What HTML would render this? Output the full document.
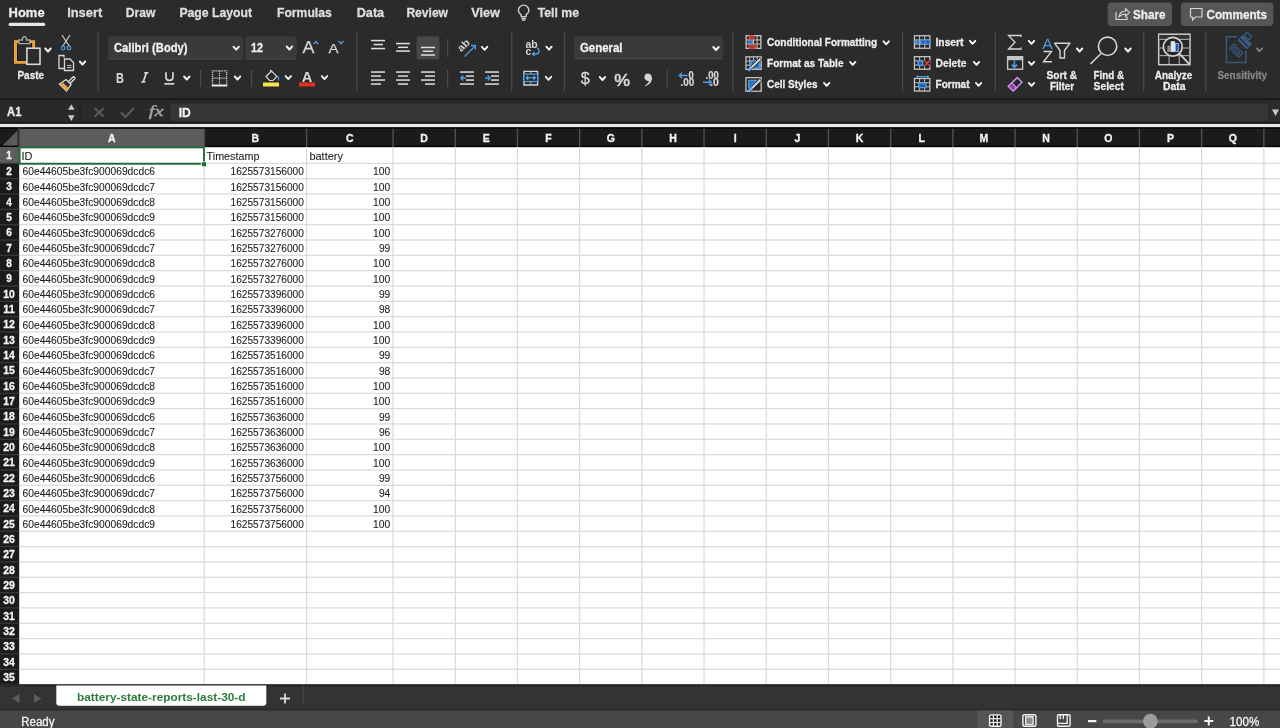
<!DOCTYPE html>
<html><head><meta charset="utf-8"><title>Excel</title>
<style>html,body{margin:0;padding:0;width:1280px;height:728px;overflow:hidden;background:#2b2b2b}
svg{display:block;will-change:transform}</style></head><body>
<svg width="1280" height="728" viewBox="0 0 1280 728" font-family='"Liberation Sans", sans-serif'><rect x="0" y="0" width="1280" height="98" fill="#2b2b2b"/>
<text x="8.6" y="17" font-size="13" font-weight="bold" fill="#ececec" text-anchor="start" textLength="36" lengthAdjust="spacingAndGlyphs" stroke="#ececec" stroke-width="0.3">Home</text>
<text x="67.2" y="17" font-size="13" font-weight="bold" fill="#dedede" text-anchor="start" textLength="35" lengthAdjust="spacingAndGlyphs" stroke="#dedede" stroke-width="0.3">Insert</text>
<text x="125.8" y="17" font-size="13" font-weight="bold" fill="#dedede" text-anchor="start" textLength="29.7" lengthAdjust="spacingAndGlyphs" stroke="#dedede" stroke-width="0.3">Draw</text>
<text x="179.4" y="17" font-size="13" font-weight="bold" fill="#dedede" text-anchor="start" textLength="72.6" lengthAdjust="spacingAndGlyphs" stroke="#dedede" stroke-width="0.3">Page Layout</text>
<text x="277" y="17" font-size="13" font-weight="bold" fill="#dedede" text-anchor="start" textLength="54.7" lengthAdjust="spacingAndGlyphs" stroke="#dedede" stroke-width="0.3">Formulas</text>
<text x="356.7" y="17" font-size="13" font-weight="bold" fill="#dedede" text-anchor="start" textLength="27.5" lengthAdjust="spacingAndGlyphs" stroke="#dedede" stroke-width="0.3">Data</text>
<text x="406.4" y="17" font-size="13" font-weight="bold" fill="#dedede" text-anchor="start" textLength="41.6" lengthAdjust="spacingAndGlyphs" stroke="#dedede" stroke-width="0.3">Review</text>
<text x="471.3" y="17" font-size="13" font-weight="bold" fill="#dedede" text-anchor="start" textLength="28.7" lengthAdjust="spacingAndGlyphs" stroke="#dedede" stroke-width="0.3">View</text>
<text x="537.7" y="17" font-size="13" font-weight="bold" fill="#dedede" text-anchor="start" textLength="41.3" lengthAdjust="spacingAndGlyphs" stroke="#dedede" stroke-width="0.3">Tell me</text>
<rect x="8.6" y="22.8" width="36.7" height="3.2" fill="#e6e6e6" rx="1.6"/>
<path d="M521.3,16.6 L521.1,14.6 C519.2,13.3 518.4,11.7 518.4,10.4 A5.25,5.25 0 1 1 528.9,10.4 C528.9,11.7 528.1,13.3 526.2,14.6 L526,16.6 Z" stroke="#d2d2d2" stroke-width="1.4" fill="none"/>
<path d="M521.3,18.3 H526 M521.9,20 H525.4" stroke="#d2d2d2" stroke-width="1.3" fill="none"/>
<rect x="1107.7" y="2.4" width="64.3" height="23.6" fill="#565656" rx="4"/>
<rect x="1180.9" y="2.4" width="92.4" height="23.6" fill="#565656" rx="4"/>
<path d="M1116,12 V19.5 H1127 V16.5" stroke="#d4d4d4" stroke-width="1.2" fill="none"/>
<path d="M1119,17 C1119.5,12.5 1122,11 1125.5,11 V8.5 L1129.5,12.5 L1125.5,16.5 V14 C1122.5,14 1120.5,15 1119,17 Z" stroke="#d4d4d4" stroke-width="1.1" fill="none"/>
<text x="1133" y="18.5" font-size="13" font-weight="bold" fill="#ececec" text-anchor="start" textLength="32.5" lengthAdjust="spacingAndGlyphs" stroke="#ececec" stroke-width="0.3">Share</text>
<path d="M1190.5,8.5 H1202 V17 H1195.5 L1192.5,20 V17 H1190.5 Z" stroke="#d4d4d4" stroke-width="1.2" fill="none" stroke-linejoin="round"/>
<text x="1206.5" y="18.5" font-size="13" font-weight="bold" fill="#ececec" text-anchor="start" textLength="60.5" lengthAdjust="spacingAndGlyphs" stroke="#ececec" stroke-width="0.3">Comments</text>
<rect x="15.5" y="41.7" width="18.1" height="20.6" fill="#2b2b2b" stroke="#e9a23b" stroke-width="3"/>
<rect x="17.5" y="43.6" width="14.1" height="16.6" fill="none" stroke="#0e1a26" stroke-width="1"/>
<path d="M18.9,43.6 V40 H22.3 C22.3,35.6 26.5,35.6 26.5,40 H29.8 V43.6 Z" stroke="#a8a8a8" stroke-width="1.3" fill="#2b2b2b"/>
<rect x="26.9" y="48.2" width="13.1" height="16.1" fill="#2b2b2b" stroke="#d8d8d8" stroke-width="1.6"/>
<path d="M45.3,48.5 L48,51.5 L50.7,48.5" stroke="#f4f4f4" stroke-width="1.9" fill="none" stroke-linecap="round" stroke-linejoin="round"/>
<text x="17.5" y="79" font-size="11.5" font-weight="bold" fill="#ececec" text-anchor="start" textLength="26.5" lengthAdjust="spacingAndGlyphs" stroke="#ececec" stroke-width="0.3">Paste</text>
<path d="M62,35 L69.5,46.5 M70,35 L62.5,46.5" stroke="#d6d6d6" stroke-width="1.1" fill="none"/>
<circle cx="63.2" cy="48" r="1.8" fill="none" stroke="#4f9be0" stroke-width="1.2"/>
<circle cx="69" cy="48" r="1.8" fill="none" stroke="#4f9be0" stroke-width="1.2"/>
<path d="M64,57.5 V55.5 H59 V68.5 H64" stroke="#d6d6d6" stroke-width="1.3" fill="none"/>
<path d="M64.5,59 H70 L73.5,62.5 V70.5 H64.5 Z" stroke="#d6d6d6" stroke-width="1.3" fill="none"/>
<path d="M67,65.5 H71.5 M67,67.5 H71.5" stroke="#d6d6d6" stroke-width="0.9" fill="none"/>
<path d="M79.8,61.5 L82.5,64.5 L85.2,61.5" stroke="#f4f4f4" stroke-width="1.9" fill="none" stroke-linecap="round" stroke-linejoin="round"/>
<path d="M59.5,84 L66.5,91 L71,84.5 L66,79.5 Z" stroke="#e2e2e2" stroke-width="1.3" fill="#2b2b2b"/>
<path d="M60.5,85 L66.5,91 L68.5,88 L63,82.5 Z" stroke="none" stroke-width="0" fill="#e9a440"/>
<path d="M68.5,81.5 L73.5,76.5 M70.3,83.3 L75.3,78.3 M73.5,76.5 L75.3,78.3" stroke="#e2e2e2" stroke-width="1.3" fill="none"/>
<rect x="97.5" y="32" width="1.2" height="59" fill="#4b4b4b"/>
<rect x="108" y="36.2" width="135.2" height="23.4" fill="#3a3a3a" rx="3.5"/>
<rect x="108.5" y="58.3" width="134.2" height="1.3" fill="#454545"/>
<text x="114" y="52" font-size="12.5" font-weight="bold" fill="#f0f0f0" text-anchor="start" textLength="73.6" lengthAdjust="spacingAndGlyphs" stroke="#f0f0f0" stroke-width="0.3">Calibri (Body)</text>
<path d="M233.5,46.7 L236.2,49.7 L238.89999999999998,46.7" stroke="#f4f4f4" stroke-width="1.9" fill="none" stroke-linecap="round" stroke-linejoin="round"/>
<rect x="245.3" y="36.2" width="51.4" height="23.4" fill="#3a3a3a" rx="3.5"/>
<rect x="245.8" y="58.3" width="50.4" height="1.3" fill="#454545"/>
<text x="251" y="52" font-size="12.5" font-weight="bold" fill="#f0f0f0" text-anchor="start" textLength="12" lengthAdjust="spacingAndGlyphs" stroke="#f0f0f0" stroke-width="0.3">12</text>
<path d="M286.7,46.5 L289.4,49.5 L292.09999999999997,46.5" stroke="#f4f4f4" stroke-width="1.9" fill="none" stroke-linecap="round" stroke-linejoin="round"/>
<text x="302.5" y="53" font-size="16" font-weight="normal" fill="#d4d4d4" text-anchor="start" textLength="12" lengthAdjust="spacingAndGlyphs" stroke="#d4d4d4" stroke-width="0.25">A</text>
<path d="M313.7,44 L316,41.6 L318.3,44" stroke="#4f9be0" stroke-width="1.4" fill="none"/>
<text x="328.5" y="53" font-size="13" font-weight="normal" fill="#d4d4d4" text-anchor="start" textLength="10" lengthAdjust="spacingAndGlyphs" stroke="#d4d4d4" stroke-width="0.25">A</text>
<path d="M338.5,41 L341,43.7 L343.5,41" stroke="#4f9be0" stroke-width="1.3" fill="none"/>
<text x="116" y="82.7" font-size="14.5" font-weight="bold" fill="#dadada" text-anchor="start" textLength="7.9" lengthAdjust="spacingAndGlyphs" stroke="#dadada" stroke-width="0.1">B</text>
<path d="M144.2,72.9 H148.3 M141.2,82 H145.3 M146.3,72.9 L143.2,82" stroke="#d8d8d8" stroke-width="1.7" fill="none"/>
<path d="M166,72.3 V77.6 C166,81.3 172.9,81.3 172.9,77.6 V72.3" stroke="#d8d8d8" stroke-width="1.7" fill="none"/>
<rect x="164.4" y="83" width="9.9" height="1.7" fill="#d8d8d8"/>
<path d="M184.10000000000002,76.5 L186.8,79.5 L189.5,76.5" stroke="#f4f4f4" stroke-width="1.9" fill="none" stroke-linecap="round" stroke-linejoin="round"/>
<rect x="200.0" y="70" width="1.2" height="17" fill="#4b4b4b"/>
<path d="M212.5,70.8 H226.6 V85.5 H212.5 Z" stroke="#bdbdbd" stroke-width="1.3" fill="none" stroke-dasharray="1.3,0.6"/>
<path d="M219.5,71 V85 M212.5,78.2 H226.6" stroke="#c4c4c4" stroke-width="1.2" fill="none" stroke-dasharray="1.2,0.8"/>
<rect x="211.8" y="84.6" width="15.5" height="1.8" fill="#ececec"/>
<path d="M234.8,76.5 L237.5,79.5 L240.2,76.5" stroke="#f4f4f4" stroke-width="1.9" fill="none" stroke-linecap="round" stroke-linejoin="round"/>
<rect x="251.0" y="70" width="1.2" height="17" fill="#4b4b4b"/>
<path d="M266,76.5 L271.5,71 L277,76.5 L273,80.5 H269.5 Z" stroke="#d6d6d6" stroke-width="1.2" fill="none"/>
<path d="M270,70 L272,72" stroke="#d6d6d6" stroke-width="1.2" fill="none"/>
<path d="M277.5,76 C279,77.5 279,80 277.7,80.5" stroke="#4f9be0" stroke-width="1.3" fill="none"/>
<rect x="263" y="82.5" width="16" height="4" fill="#f3e54a"/>
<path d="M285.6,76.1 L288.3,79.1 L291.0,76.1" stroke="#f4f4f4" stroke-width="1.9" fill="none" stroke-linecap="round" stroke-linejoin="round"/>
<text x="301.8" y="81.6" font-size="14" font-weight="bold" fill="#d8d8d8" text-anchor="start" textLength="10.6" lengthAdjust="spacingAndGlyphs">A</text>
<rect x="299" y="82.5" width="16" height="4" fill="#e2301f"/>
<path d="M321.8,76.1 L324.5,79.1 L327.2,76.1" stroke="#f4f4f4" stroke-width="1.9" fill="none" stroke-linecap="round" stroke-linejoin="round"/>
<rect x="356.2" y="32" width="1.2" height="59" fill="#4b4b4b"/>
<rect x="371" y="39.8" width="14" height="1.5" fill="#dedede"/>
<rect x="373.5" y="43.8" width="9.5" height="1.5" fill="#dedede"/>
<rect x="371" y="47.8" width="14" height="1.5" fill="#dedede"/>
<rect x="396" y="42.8" width="14" height="1.5" fill="#dedede"/>
<rect x="398" y="46.599999999999994" width="10" height="1.5" fill="#dedede"/>
<rect x="396" y="50.3" width="14" height="1.5" fill="#dedede"/>
<rect x="416.5" y="36.3" width="23" height="23.1" fill="#474747" rx="3"/>
<rect x="421" y="46.699999999999996" width="14" height="1.5" fill="#dedede"/>
<rect x="423" y="50.5" width="10" height="1.5" fill="#dedede"/>
<rect x="421" y="54.3" width="14" height="1.5" fill="#dedede"/>
<rect x="371" y="71.3" width="14" height="1.5" fill="#dedede"/>
<rect x="371" y="75.3" width="10" height="1.5" fill="#dedede"/>
<rect x="371" y="79.3" width="14" height="1.5" fill="#dedede"/>
<rect x="371" y="83.3" width="10" height="1.5" fill="#dedede"/>
<rect x="396" y="71.3" width="14" height="1.5" fill="#dedede"/>
<rect x="398" y="75.3" width="10" height="1.5" fill="#dedede"/>
<rect x="396" y="79.3" width="14" height="1.5" fill="#dedede"/>
<rect x="398" y="83.3" width="10" height="1.5" fill="#dedede"/>
<rect x="421" y="71.3" width="14" height="1.5" fill="#dedede"/>
<rect x="425" y="75.3" width="10" height="1.5" fill="#dedede"/>
<rect x="421" y="79.3" width="14" height="1.5" fill="#dedede"/>
<rect x="425" y="83.3" width="10" height="1.5" fill="#dedede"/>
<rect x="447.0" y="39" width="1.2" height="18" fill="#4b4b4b"/>
<rect x="447.0" y="70" width="1.2" height="17" fill="#4b4b4b"/>
<text x="0" y="0" font-size="10" font-weight="bold" fill="#d6d6d6" transform="translate(461.3,52.3) rotate(-45)" textLength="13" lengthAdjust="spacingAndGlyphs" font-family="Liberation Sans">ab</text>
<path d="M464.5,56.5 L475,46" stroke="#4f9be0" stroke-width="1.3" fill="none"/>
<path d="M471,45.5 H475.3 V49.8" stroke="#4f9be0" stroke-width="1.3" fill="none"/>
<path d="M481.90000000000003,46.8 L484.6,49.8 L487.3,46.8" stroke="#f4f4f4" stroke-width="1.9" fill="none" stroke-linecap="round" stroke-linejoin="round"/>
<rect x="460" y="71.3" width="14" height="1.5" fill="#dedede"/>
<rect x="466" y="75.3" width="8" height="1.5" fill="#dedede"/>
<rect x="466" y="79.3" width="8" height="1.5" fill="#dedede"/>
<rect x="460" y="83.3" width="14" height="1.5" fill="#dedede"/>
<path d="M466,78 H460.8 M463.3,75.5 L460.8,78 L463.3,80.5" stroke="#4f9be0" stroke-width="1.3" fill="none"/>
<rect x="485" y="71.3" width="14" height="1.5" fill="#dedede"/>
<rect x="491" y="75.3" width="8" height="1.5" fill="#dedede"/>
<rect x="491" y="79.3" width="8" height="1.5" fill="#dedede"/>
<rect x="485" y="83.3" width="14" height="1.5" fill="#dedede"/>
<path d="M485,78 H490.2 M487.7,75.5 L490.2,78 L487.7,80.5" stroke="#4f9be0" stroke-width="1.3" fill="none"/>
<rect x="511.2" y="32" width="1.2" height="59" fill="#4b4b4b"/>
<text x="525.4" y="48" font-size="10" font-weight="bold" fill="#d6d6d6" text-anchor="start" textLength="12.2" lengthAdjust="spacingAndGlyphs">ab</text>
<text x="525.4" y="55.3" font-size="10" font-weight="bold" fill="#d6d6d6" text-anchor="start" textLength="5.8" lengthAdjust="spacingAndGlyphs">c</text>
<path d="M537,48 C540,49 540,54 536,54 H532.5 M534.5,52 L532.5,54 L534.5,56" stroke="#4f9be0" stroke-width="1.3" fill="none"/>
<path d="M546.3,46.7 L549,49.7 L551.7,46.7" stroke="#f4f4f4" stroke-width="1.9" fill="none" stroke-linecap="round" stroke-linejoin="round"/>
<path d="M524,71.4 H537.6 V85 H524 Z" stroke="#d4d4d4" stroke-width="1.4" fill="none"/>
<path d="M530.8,71.4 V74 M530.8,81.7 V85" stroke="#bcbcbc" stroke-width="1" fill="none"/>
<rect x="524" y="74.2" width="13.6" height="7.3" fill="#262626" stroke="#4f9be0" stroke-width="1.3"/>
<path d="M526.3,77.85 H535.3 M528.2,75.9 L526.3,77.85 L528.2,79.8 M533.4,75.9 L535.3,77.85 L533.4,79.8" stroke="#5aa6ea" stroke-width="1.4" fill="none"/>
<path d="M545.8,76.8 L548.5,79.8 L551.2,76.8" stroke="#f4f4f4" stroke-width="1.9" fill="none" stroke-linecap="round" stroke-linejoin="round"/>
<rect x="563.8" y="32" width="1.2" height="59" fill="#4b4b4b"/>
<rect x="574.1" y="36.2" width="149.1" height="23" fill="#3a3a3a" rx="3.5"/>
<rect x="574.6" y="57.9" width="148.1" height="1.3" fill="#454545"/>
<text x="580" y="52" font-size="12.5" font-weight="bold" fill="#f0f0f0" text-anchor="start" textLength="42.5" lengthAdjust="spacingAndGlyphs" stroke="#f0f0f0" stroke-width="0.3">General</text>
<path d="M713.3,47.0 L716,50.0 L718.7,47.0" stroke="#f4f4f4" stroke-width="1.9" fill="none" stroke-linecap="round" stroke-linejoin="round"/>
<text x="580.8" y="84.2" font-size="16" font-weight="normal" fill="#d6d6d6" text-anchor="start" textLength="9" lengthAdjust="spacingAndGlyphs" stroke="#d6d6d6" stroke-width="0.3">$</text>
<path d="M599.8,77.0 L602.5,80.0 L605.2,77.0" stroke="#f4f4f4" stroke-width="1.9" fill="none" stroke-linecap="round" stroke-linejoin="round"/>
<text x="614.2" y="85.8" font-size="16" font-weight="normal" fill="#d6d6d6" text-anchor="start" textLength="15.8" lengthAdjust="spacingAndGlyphs" stroke="#d6d6d6" stroke-width="0.6">%</text>
<path d="M647.6,73.5 C650.3,73.5 652,75.5 652,78.3 C652,81.8 649.5,84.8 645.5,86.3 L645,85.3 C647.3,84.2 648.6,82.6 648.9,81 C646.2,81 644.4,79.4 644.4,77.2 C644.4,75.1 645.8,73.5 647.6,73.5 Z" fill="#d6d6d6"/>
<rect x="666.5" y="70" width="1.2" height="17" fill="#4b4b4b"/>
<text x="688.6" y="78.5" font-size="10" font-weight="bold" fill="#d6d6d6" text-anchor="start" textLength="5.2" lengthAdjust="spacingAndGlyphs" stroke="#d6d6d6" stroke-width="0.2">0</text>
<text x="680.6" y="86" font-size="10" font-weight="bold" fill="#d6d6d6" text-anchor="start" textLength="13.8" lengthAdjust="spacingAndGlyphs" stroke="#d6d6d6" stroke-width="0.2">.00</text>
<path d="M687.5,75.5 H679.3 M682,72.8 L679.3,75.5 L682,78.2" stroke="#4f9be0" stroke-width="1.4" fill="none"/>
<text x="705.6" y="78.5" font-size="10" font-weight="bold" fill="#d6d6d6" text-anchor="start" textLength="13.2" lengthAdjust="spacingAndGlyphs" stroke="#d6d6d6" stroke-width="0.2">.00</text>
<text x="710" y="86" font-size="10" font-weight="bold" fill="#d6d6d6" text-anchor="start" textLength="8.8" lengthAdjust="spacingAndGlyphs" stroke="#d6d6d6" stroke-width="0.2">.0</text>
<path d="M703,82.2 H711.5 M708.8,79.5 L711.5,82.2 L708.8,84.9" stroke="#4f9be0" stroke-width="1.4" fill="none"/>
<rect x="732.3" y="32" width="1.2" height="59" fill="#4b4b4b"/>
<rect x="745.5" y="35" width="16" height="14" fill="#c4c4c4"/>
<rect x="746.8" y="36.3" width="2.6" height="3.13" fill="#262626"/>
<rect x="746.8" y="40.43" width="2.6" height="3.13" fill="#262626"/>
<rect x="746.8" y="44.57" width="2.6" height="3.13" fill="#262626"/>
<rect x="750.4" y="36.3" width="2.6" height="3.13" fill="#262626"/>
<rect x="750.4" y="40.43" width="2.6" height="3.13" fill="#262626"/>
<rect x="750.4" y="44.57" width="2.6" height="3.13" fill="#262626"/>
<rect x="754.0" y="36.3" width="2.6" height="3.13" fill="#262626"/>
<rect x="754.0" y="40.43" width="2.6" height="3.13" fill="#262626"/>
<rect x="754.0" y="44.57" width="2.6" height="3.13" fill="#262626"/>
<rect x="757.6" y="36.3" width="2.6" height="3.13" fill="#262626"/>
<rect x="757.6" y="40.43" width="2.6" height="3.13" fill="#262626"/>
<rect x="757.6" y="44.57" width="2.6" height="3.13" fill="#262626"/>
<rect x="748.6" y="35.1" width="5.9" height="4.8" fill="#d9534a"/>
<rect x="748.6" y="44.2" width="7.9" height="4.8" fill="#d9534a"/>
<rect x="747.8" y="40.1" width="5.1" height="3.8" fill="#4f9be0"/>
<rect x="749.6" y="36.2" width="3.9" height="2.6" fill="#a83a33"/>
<rect x="749.6" y="45.3" width="5.9" height="2.6" fill="#a83a33"/>
<rect x="748.9" y="41" width="2.9" height="2" fill="#2a6fb8"/>
<text x="767" y="46.2" font-size="11" font-weight="bold" fill="#ececec" text-anchor="start" textLength="110" lengthAdjust="spacingAndGlyphs" stroke="#ececec" stroke-width="0.3">Conditional Formatting</text>
<path d="M883.5,41.3 L886.2,44.3 L888.9000000000001,41.3" stroke="#f4f4f4" stroke-width="1.9" fill="none" stroke-linecap="round" stroke-linejoin="round"/>
<rect x="745.3" y="56.2" width="16.5" height="13.8" fill="#c4c4c4"/>
<rect x="746.6" y="57.5" width="2.73" height="3.07" fill="#262626"/>
<rect x="746.6" y="61.57" width="2.73" height="3.07" fill="#262626"/>
<rect x="746.6" y="65.63" width="2.73" height="3.07" fill="#262626"/>
<rect x="750.32" y="57.5" width="2.73" height="3.07" fill="#262626"/>
<rect x="750.32" y="61.57" width="2.73" height="3.07" fill="#262626"/>
<rect x="750.32" y="65.63" width="2.73" height="3.07" fill="#262626"/>
<rect x="754.05" y="57.5" width="2.73" height="3.07" fill="#262626"/>
<rect x="754.05" y="61.57" width="2.73" height="3.07" fill="#262626"/>
<rect x="754.05" y="65.63" width="2.73" height="3.07" fill="#262626"/>
<rect x="757.77" y="57.5" width="2.73" height="3.07" fill="#262626"/>
<rect x="757.77" y="61.57" width="2.73" height="3.07" fill="#262626"/>
<rect x="757.77" y="65.63" width="2.73" height="3.07" fill="#262626"/>
<rect x="750.2" y="60" width="10.3" height="8.8" fill="#4f9be0"/>
<rect x="751.8" y="61.5" width="7.2" height="6" fill="#2f6fc0"/>
<path d="M749,69.8 L760.8,58.5" stroke="#1a1a1a" stroke-width="3.6" fill="none"/>
<path d="M749.5,69.3 L760.5,58.8" stroke="#d6d6d6" stroke-width="2.2" fill="none"/>
<path d="M748.3,70.5 L752.3,66.5" stroke="#6fb0f0" stroke-width="2.6" fill="none"/>
<text x="767" y="67.2" font-size="11" font-weight="bold" fill="#ececec" text-anchor="start" textLength="76.5" lengthAdjust="spacingAndGlyphs" stroke="#ececec" stroke-width="0.3">Format as Table</text>
<path d="M850.0,61.9 L852.7,64.9 L855.4000000000001,61.9" stroke="#f4f4f4" stroke-width="1.9" fill="none" stroke-linecap="round" stroke-linejoin="round"/>
<rect x="745.3" y="77" width="16.5" height="14.9" fill="#c4c4c4"/>
<rect x="746.6" y="78.3" width="13.9" height="12.3" fill="#262626"/>
<path d="M748,79.8 H759 L748,89.5 Z" stroke="none" stroke-width="0" fill="#4f9be0"/>
<path d="M749.3,81 H756 L749.3,87 Z" stroke="none" stroke-width="0" fill="#2f6fc0"/>
<path d="M749,91 L760.8,79.5" stroke="#1a1a1a" stroke-width="3.6" fill="none"/>
<path d="M749.5,90.5 L760.5,79.8" stroke="#d6d6d6" stroke-width="2.2" fill="none"/>
<path d="M748.3,91.6 L752.3,87.6" stroke="#6fb0f0" stroke-width="2.6" fill="none"/>
<text x="767" y="88.2" font-size="11" font-weight="bold" fill="#ececec" text-anchor="start" textLength="50.5" lengthAdjust="spacingAndGlyphs" stroke="#ececec" stroke-width="0.3">Cell Styles</text>
<path d="M824.0,82.9 L826.7,85.9 L829.4000000000001,82.9" stroke="#f4f4f4" stroke-width="1.9" fill="none" stroke-linecap="round" stroke-linejoin="round"/>
<rect x="901.9" y="32" width="1.2" height="59" fill="#4b4b4b"/>
<rect x="913.8" y="35.1" width="16.7" height="13.8" fill="#c4c4c4"/>
<rect x="915.1" y="36.4" width="4.03" height="3.07" fill="#262626"/>
<rect x="915.1" y="40.47" width="4.03" height="3.07" fill="#262626"/>
<rect x="915.1" y="44.53" width="4.03" height="3.07" fill="#262626"/>
<rect x="920.13" y="36.4" width="4.03" height="3.07" fill="#262626"/>
<rect x="920.13" y="40.47" width="4.03" height="3.07" fill="#262626"/>
<rect x="920.13" y="44.53" width="4.03" height="3.07" fill="#262626"/>
<rect x="925.17" y="36.4" width="4.03" height="3.07" fill="#262626"/>
<rect x="925.17" y="40.47" width="4.03" height="3.07" fill="#262626"/>
<rect x="925.17" y="44.53" width="4.03" height="3.07" fill="#262626"/>
<rect x="920" y="39.3" width="10.5" height="5.4" fill="#4f9be0"/>
<rect x="921.3" y="40.4" width="3.5" height="3.2" fill="#2a62b0"/>
<rect x="925.9" y="40.4" width="3.5" height="3.2" fill="#2a62b0"/>
<path d="M920.5,42 H914.8 M917.6,39.2 L914.8,42 L917.6,44.8" stroke="#4f9be0" stroke-width="1.5" fill="none"/>
<text x="935.5" y="46.2" font-size="11" font-weight="bold" fill="#ececec" text-anchor="start" textLength="28" lengthAdjust="spacingAndGlyphs" stroke="#ececec" stroke-width="0.3">Insert</text>
<path d="M969.9,40.8 L972.6,43.8 L975.3000000000001,40.8" stroke="#f4f4f4" stroke-width="1.9" fill="none" stroke-linecap="round" stroke-linejoin="round"/>
<rect x="913.8" y="56" width="16.7" height="13.9" fill="#c4c4c4"/>
<rect x="915.1" y="57.3" width="4.03" height="3.1" fill="#262626"/>
<rect x="915.1" y="61.4" width="4.03" height="3.1" fill="#262626"/>
<rect x="915.1" y="65.5" width="4.03" height="3.1" fill="#262626"/>
<rect x="920.13" y="57.3" width="4.03" height="3.1" fill="#262626"/>
<rect x="920.13" y="61.4" width="4.03" height="3.1" fill="#262626"/>
<rect x="920.13" y="65.5" width="4.03" height="3.1" fill="#262626"/>
<rect x="925.17" y="57.3" width="4.03" height="3.1" fill="#262626"/>
<rect x="925.17" y="61.4" width="4.03" height="3.1" fill="#262626"/>
<rect x="925.17" y="65.5" width="4.03" height="3.1" fill="#262626"/>
<rect x="917.5" y="60.2" width="5.9" height="5.9" fill="#4f9be0"/>
<rect x="918.9" y="61.6" width="3.1" height="3.1" fill="#2a62b0"/>
<rect x="923.6" y="60" width="6.8" height="6.4" fill="#262626"/>
<path d="M924.3,60.6 L929.8,65.9 M929.8,60.6 L924.3,65.9" stroke="#e0453a" stroke-width="1.4" fill="none"/>
<text x="935.5" y="67.2" font-size="11" font-weight="bold" fill="#ececec" text-anchor="start" textLength="31" lengthAdjust="spacingAndGlyphs" stroke="#ececec" stroke-width="0.3">Delete</text>
<path d="M973.8,61.9 L976.5,64.9 L979.2,61.9" stroke="#f4f4f4" stroke-width="1.9" fill="none" stroke-linecap="round" stroke-linejoin="round"/>
<rect x="913.8" y="77.8" width="16.7" height="13.9" fill="#c4c4c4"/>
<rect x="915.1" y="79.1" width="4.03" height="3.1" fill="#262626"/>
<rect x="915.1" y="83.2" width="4.03" height="3.1" fill="#262626"/>
<rect x="915.1" y="87.3" width="4.03" height="3.1" fill="#262626"/>
<rect x="920.13" y="79.1" width="4.03" height="3.1" fill="#262626"/>
<rect x="920.13" y="83.2" width="4.03" height="3.1" fill="#262626"/>
<rect x="920.13" y="87.3" width="4.03" height="3.1" fill="#262626"/>
<rect x="925.17" y="79.1" width="4.03" height="3.1" fill="#262626"/>
<rect x="925.17" y="83.2" width="4.03" height="3.1" fill="#262626"/>
<rect x="925.17" y="87.3" width="4.03" height="3.1" fill="#262626"/>
<rect x="918" y="82.5" width="8.8" height="5.8" fill="#4f9be0"/>
<rect x="919.4" y="83.8" width="6" height="3.2" fill="#2a62b0"/>
<path d="M917.2,76.6 H928 M917.2,75.2 V78 M928,75.2 V78" stroke="#4f9be0" stroke-width="1.3" fill="none"/>
<text x="935.5" y="88.2" font-size="11" font-weight="bold" fill="#ececec" text-anchor="start" textLength="34" lengthAdjust="spacingAndGlyphs" stroke="#ececec" stroke-width="0.3">Format</text>
<path d="M975.9,82.9 L978.6,85.9 L981.3000000000001,82.9" stroke="#f4f4f4" stroke-width="1.9" fill="none" stroke-linecap="round" stroke-linejoin="round"/>
<rect x="994.7" y="32" width="1.2" height="59" fill="#4b4b4b"/>
<path d="M1021,37 V35.5 H1008.5 L1015,42.2 L1008.5,49 H1021 V47.5" stroke="#d6d6d6" stroke-width="1.3" fill="none"/>
<path d="M1028.8,40.8 L1031.5,43.8 L1034.2,40.8" stroke="#f4f4f4" stroke-width="1.9" fill="none" stroke-linecap="round" stroke-linejoin="round"/>
<rect x="1006.9" y="56" width="16.4" height="13.9" fill="#c4c4c4"/>
<rect x="1008.3" y="60.2" width="13.6" height="8.3" fill="#262626"/>
<path d="M1014.4,60.5 V67.3 M1011.6,64.6 L1014.4,67.4 L1017.2,64.6" stroke="#4f9be0" stroke-width="1.6" fill="none"/>
<path d="M1028.8,61.9 L1031.5,64.9 L1034.2,61.9" stroke="#f4f4f4" stroke-width="1.9" fill="none" stroke-linecap="round" stroke-linejoin="round"/>
<path d="M1017.3,77.6 L1022,82.2 L1013.3,91 L1008.3,86.3 Z" stroke="#cf8fe6" stroke-width="1.5" fill="#262626"/>
<path d="M1008.3,86.3 L1011.7,82.9 L1016.6,87.7 L1013.3,91 Z" stroke="#cf8fe6" stroke-width="1.2" fill="#8e3aa8"/>
<path d="M1028.8,82.9 L1031.5,85.9 L1034.2,82.9" stroke="#f4f4f4" stroke-width="1.9" fill="none" stroke-linecap="round" stroke-linejoin="round"/>
<text x="1042.2" y="48.7" font-size="15" font-weight="normal" fill="#4f9be0" text-anchor="start" textLength="10.6" lengthAdjust="spacingAndGlyphs">A</text>
<path d="M1043.5,51.5 H1051.5 L1043.5,61.8 H1052" stroke="#d6d6d6" stroke-width="1.4" fill="none"/>
<path d="M1054.5,43.2 H1070 L1064.5,50.5 V58 H1060 V50.5 Z" stroke="#d6d6d6" stroke-width="1.4" fill="none" stroke-linejoin="round"/>
<path d="M1076.8999999999999,48.5 L1079.6,51.5 L1082.3,48.5" stroke="#f4f4f4" stroke-width="1.9" fill="none" stroke-linecap="round" stroke-linejoin="round"/>
<text x="1046.5" y="78.7" font-size="11" font-weight="bold" fill="#ececec" text-anchor="start" textLength="30.5" lengthAdjust="spacingAndGlyphs" stroke="#ececec" stroke-width="0.3">Sort &amp;</text>
<text x="1050" y="89.9" font-size="11" font-weight="bold" fill="#ececec" text-anchor="start" textLength="24" lengthAdjust="spacingAndGlyphs" stroke="#ececec" stroke-width="0.3">Filter</text>
<circle cx="1107.6" cy="46.3" r="9.2" fill="none" stroke="#d6d6d6" stroke-width="1.6"/>
<path d="M1090.5,64 L1101,53.5" stroke="#d6d6d6" stroke-width="1.6" fill="none"/>
<path d="M1125.3,48.5 L1128,51.5 L1130.7,48.5" stroke="#f4f4f4" stroke-width="1.9" fill="none" stroke-linecap="round" stroke-linejoin="round"/>
<text x="1093.5" y="78.7" font-size="11" font-weight="bold" fill="#ececec" text-anchor="start" textLength="30.5" lengthAdjust="spacingAndGlyphs" stroke="#ececec" stroke-width="0.3">Find &amp;</text>
<text x="1093.5" y="89.9" font-size="11" font-weight="bold" fill="#ececec" text-anchor="start" textLength="30.5" lengthAdjust="spacingAndGlyphs" stroke="#ececec" stroke-width="0.3">Select</text>
<rect x="1143.1" y="32" width="1.2" height="59" fill="#4b4b4b"/>
<rect x="1158.7" y="34.2" width="31.3" height="30.5" fill="#262626" stroke="#cacaca" stroke-width="1.5"/>
<rect x="1159.5" y="35" width="29.7" height="4" fill="#333333"/>
<path d="M1159.4,39.4 H1189.3" stroke="#a8a8a8" stroke-width="1.1" fill="none"/>
<path d="M1159.4,48 H1189.3" stroke="#a8a8a8" stroke-width="1.1" fill="none"/>
<path d="M1159.4,55.6 H1189.3" stroke="#a8a8a8" stroke-width="1.1" fill="none"/>
<path d="M1169.1,55.6 V64" stroke="#a8a8a8" stroke-width="1.1" fill="none"/>
<path d="M1179.3,55.6 V64" stroke="#a8a8a8" stroke-width="1.1" fill="none"/>
<circle cx="1172.8" cy="46.7" r="9.4" fill="#262626" stroke="#d2d2d2" stroke-width="1.7"/>
<path d="M1179.4,53.6 L1189.3,64.2" stroke="#d2d2d2" stroke-width="1.9" fill="none"/>
<rect x="1167.3" y="45.7" width="3.4" height="6.2" fill="#8c8c8c"/>
<rect x="1170.7" y="41.2" width="4.4" height="10.7" fill="#e2e2e2"/>
<rect x="1175.1" y="43" width="3.7" height="8.9" fill="#8ec0f0"/>
<rect x="1176" y="44" width="1.9" height="7" fill="#1d4fc0"/>
<text x="1154.8" y="78.7" font-size="11" font-weight="bold" fill="#ececec" text-anchor="start" textLength="37.5" lengthAdjust="spacingAndGlyphs" stroke="#ececec" stroke-width="0.3">Analyze</text>
<text x="1163" y="89.9" font-size="11" font-weight="bold" fill="#ececec" text-anchor="start" textLength="22.5" lengthAdjust="spacingAndGlyphs" stroke="#ececec" stroke-width="0.3">Data</text>
<rect x="1205.1" y="32" width="1.2" height="59" fill="#4b4b4b"/>
<path d="M1237.2,36.7 H1226.4 V62.4 H1245.9 V50.4" stroke="#3a5a7c" stroke-width="1.5" fill="none"/>
<g transform="translate(1236.2,50.6) rotate(-45)"><rect x="-2.9" y="-6.2" width="5.8" height="12.4" fill="#262626" stroke="#3a5a7c" stroke-width="1.3"/><rect x="-1" y="-4.2" width="2" height="8.4" fill="none" stroke="#3a5a7c" stroke-width="1"/><rect x="7.8" y="-7" width="8.4" height="14" fill="#3a5a7c" stroke="#262626" stroke-width="0.8"/><rect x="10.6" y="-5.6" width="1.2" height="11.2" fill="#222a33"/><rect x="16.5" y="-5.2" width="4.2" height="6.4" fill="none" stroke="#3a5a7c" stroke-width="1.3"/></g>
<path d="M1256.8,48.3 L1259.5,51.3 L1262.2,48.3" stroke="#8a8a8a" stroke-width="1.7" fill="none" stroke-linecap="round" stroke-linejoin="round"/>
<text x="1217.5" y="78.7" font-size="11" font-weight="bold" fill="#858585" text-anchor="start" textLength="49.5" lengthAdjust="spacingAndGlyphs" stroke="#858585" stroke-width="0.3">Sensitivity</text>
<rect x="0" y="98.2" width="1280" height="1.8" fill="#1c1c1c"/>
<rect x="0" y="100" width="1280" height="22.3" fill="#292929"/>
<rect x="79.5" y="100" width="1" height="22.3" fill="#1e1e1e"/>
<rect x="170.5" y="103.7" width="1098" height="17.2" fill="#363636" rx="3"/>
<rect x="1268.5" y="100" width="11.5" height="22.3" fill="#2b2b2b"/>
<rect x="0" y="122.3" width="1280" height="1.7" fill="#141414"/>
<rect x="0" y="123.9" width="1280" height="3.4" fill="#e6e6e6"/>
<text x="7.1" y="116" font-size="12.5" font-weight="bold" fill="#ececec" text-anchor="start" textLength="14.3" lengthAdjust="spacingAndGlyphs" stroke="#ececec" stroke-width="0.3">A1</text>
<path d="M68,109.7 L71.3,104.3 L74.6,109.7 Z" stroke="none" stroke-width="0" fill="#c8c8c8"/>
<path d="M68,115.2 L74.6,115.2 L71.3,121 Z" stroke="none" stroke-width="0" fill="#c8c8c8"/>
<path d="M94.7,108.2 L103.6,116.6 M103.6,108.2 L94.7,116.6" stroke="#5c5c5c" stroke-width="2.1" fill="none"/>
<path d="M120.9,112.3 L125.3,117 L133.8,108.2" stroke="#5c5c5c" stroke-width="2.1" fill="none"/>
<text x="148.8" y="116.2" font-size="15.5" font-weight="normal" fill="#a4a4a4" text-anchor="start" textLength="14.8" lengthAdjust="spacingAndGlyphs" font-family='Liberation Serif' font-style="italic" stroke="#a4a4a4" stroke-width="0.45">fx</text>
<text x="178.7" y="116.8" font-size="12.5" font-weight="bold" fill="#f2f2f2" text-anchor="start" textLength="12" lengthAdjust="spacingAndGlyphs" stroke="#f2f2f2" stroke-width="0.3">ID</text>
<path d="M1272,109.5 H1279 L1275.5,116 Z" stroke="none" stroke-width="0" fill="#c8c8c8"/>
<rect x="0" y="127.6" width="1280" height="557.4" fill="#ffffff"/>
<rect x="0" y="127.6" width="1280" height="19.400000000000006" fill="#1b1b1b"/>
<rect x="19.2" y="127.6" width="185.0" height="19.400000000000006" fill="#5c5c5c"/>
<rect x="0" y="127.3" width="1280" height="1.6" fill="#070707"/>
<rect x="204.2" y="145.5" width="1075.8" height="1.7" fill="#070707"/>
<rect x="0" y="145.5" width="19.2" height="1.7" fill="#070707"/>
<path d="M17.5,130.6 L17.5,145.5 L2.6,145.5 Z" stroke="none" stroke-width="0" fill="#5a5a5a"/>
<rect x="18.4" y="127.6" width="1.4" height="19.400000000000006" fill="#454545"/>
<rect x="203.5" y="128.79999999999998" width="1.4" height="18.200000000000006" fill="#505050"/>
<rect x="305.90000000000003" y="128.79999999999998" width="1.4" height="18.200000000000006" fill="#505050"/>
<rect x="392.35" y="128.79999999999998" width="1.4" height="18.200000000000006" fill="#505050"/>
<rect x="454.55" y="128.79999999999998" width="1.4" height="18.200000000000006" fill="#505050"/>
<rect x="516.75" y="128.79999999999998" width="1.4" height="18.200000000000006" fill="#505050"/>
<rect x="578.95" y="128.79999999999998" width="1.4" height="18.200000000000006" fill="#505050"/>
<rect x="641.15" y="128.79999999999998" width="1.4" height="18.200000000000006" fill="#505050"/>
<rect x="703.3499999999999" y="128.79999999999998" width="1.4" height="18.200000000000006" fill="#505050"/>
<rect x="765.55" y="128.79999999999998" width="1.4" height="18.200000000000006" fill="#505050"/>
<rect x="827.75" y="128.79999999999998" width="1.4" height="18.200000000000006" fill="#505050"/>
<rect x="889.95" y="128.79999999999998" width="1.4" height="18.200000000000006" fill="#505050"/>
<rect x="952.1500000000001" y="128.79999999999998" width="1.4" height="18.200000000000006" fill="#505050"/>
<rect x="1014.3499999999999" y="128.79999999999998" width="1.4" height="18.200000000000006" fill="#505050"/>
<rect x="1076.55" y="128.79999999999998" width="1.4" height="18.200000000000006" fill="#505050"/>
<rect x="1138.75" y="128.79999999999998" width="1.4" height="18.200000000000006" fill="#505050"/>
<rect x="1200.95" y="128.79999999999998" width="1.4" height="18.200000000000006" fill="#505050"/>
<rect x="1263.15" y="128.79999999999998" width="1.4" height="18.200000000000006" fill="#505050"/>
<rect x="1325.35" y="128.79999999999998" width="1.4" height="18.200000000000006" fill="#505050"/>
<text x="111.69999999999999" y="141.8" font-size="10.5" font-weight="bold" fill="#f4f4f4" text-anchor="middle" stroke="#f4f4f4" stroke-width="0.3">A</text>
<text x="255.4" y="141.8" font-size="10.5" font-weight="bold" fill="#f4f4f4" text-anchor="middle" stroke="#f4f4f4" stroke-width="0.3">B</text>
<text x="349.82500000000005" y="141.8" font-size="10.5" font-weight="bold" fill="#f4f4f4" text-anchor="middle" stroke="#f4f4f4" stroke-width="0.3">C</text>
<text x="424.15" y="141.8" font-size="10.5" font-weight="bold" fill="#f4f4f4" text-anchor="middle" stroke="#f4f4f4" stroke-width="0.3">D</text>
<text x="486.35" y="141.8" font-size="10.5" font-weight="bold" fill="#f4f4f4" text-anchor="middle" stroke="#f4f4f4" stroke-width="0.3">E</text>
<text x="548.5500000000001" y="141.8" font-size="10.5" font-weight="bold" fill="#f4f4f4" text-anchor="middle" stroke="#f4f4f4" stroke-width="0.3">F</text>
<text x="610.75" y="141.8" font-size="10.5" font-weight="bold" fill="#f4f4f4" text-anchor="middle" stroke="#f4f4f4" stroke-width="0.3">G</text>
<text x="672.95" y="141.8" font-size="10.5" font-weight="bold" fill="#f4f4f4" text-anchor="middle" stroke="#f4f4f4" stroke-width="0.3">H</text>
<text x="735.15" y="141.8" font-size="10.5" font-weight="bold" fill="#f4f4f4" text-anchor="middle" stroke="#f4f4f4" stroke-width="0.3">I</text>
<text x="797.35" y="141.8" font-size="10.5" font-weight="bold" fill="#f4f4f4" text-anchor="middle" stroke="#f4f4f4" stroke-width="0.3">J</text>
<text x="859.5500000000001" y="141.8" font-size="10.5" font-weight="bold" fill="#f4f4f4" text-anchor="middle" stroke="#f4f4f4" stroke-width="0.3">K</text>
<text x="921.7500000000001" y="141.8" font-size="10.5" font-weight="bold" fill="#f4f4f4" text-anchor="middle" stroke="#f4f4f4" stroke-width="0.3">L</text>
<text x="983.95" y="141.8" font-size="10.5" font-weight="bold" fill="#f4f4f4" text-anchor="middle" stroke="#f4f4f4" stroke-width="0.3">M</text>
<text x="1046.15" y="141.8" font-size="10.5" font-weight="bold" fill="#f4f4f4" text-anchor="middle" stroke="#f4f4f4" stroke-width="0.3">N</text>
<text x="1108.35" y="141.8" font-size="10.5" font-weight="bold" fill="#f4f4f4" text-anchor="middle" stroke="#f4f4f4" stroke-width="0.3">O</text>
<text x="1170.5500000000002" y="141.8" font-size="10.5" font-weight="bold" fill="#f4f4f4" text-anchor="middle" stroke="#f4f4f4" stroke-width="0.3">P</text>
<text x="1232.75" y="141.8" font-size="10.5" font-weight="bold" fill="#f4f4f4" text-anchor="middle" stroke="#f4f4f4" stroke-width="0.3">Q</text>
<text x="1294.95" y="141.8" font-size="10.5" font-weight="bold" fill="#f4f4f4" text-anchor="middle" stroke="#f4f4f4" stroke-width="0.3">R</text>
<rect x="0" y="147.0" width="19.2" height="538.0" fill="#1b1b1b"/>
<rect x="0" y="147.0" width="19.2" height="16.349999999999994" fill="#5c5c5c"/>
<rect x="203.6" y="147.0" width="1.2" height="538.0" fill="#dadada"/>
<rect x="306.0" y="147.0" width="1.2" height="538.0" fill="#dadada"/>
<rect x="392.45" y="147.0" width="1.2" height="538.0" fill="#dadada"/>
<rect x="454.65" y="147.0" width="1.2" height="538.0" fill="#dadada"/>
<rect x="516.85" y="147.0" width="1.2" height="538.0" fill="#dadada"/>
<rect x="579.0500000000001" y="147.0" width="1.2" height="538.0" fill="#dadada"/>
<rect x="641.25" y="147.0" width="1.2" height="538.0" fill="#dadada"/>
<rect x="703.4499999999999" y="147.0" width="1.2" height="538.0" fill="#dadada"/>
<rect x="765.65" y="147.0" width="1.2" height="538.0" fill="#dadada"/>
<rect x="827.85" y="147.0" width="1.2" height="538.0" fill="#dadada"/>
<rect x="890.0500000000001" y="147.0" width="1.2" height="538.0" fill="#dadada"/>
<rect x="952.2500000000001" y="147.0" width="1.2" height="538.0" fill="#dadada"/>
<rect x="1014.4499999999999" y="147.0" width="1.2" height="538.0" fill="#dadada"/>
<rect x="1076.65" y="147.0" width="1.2" height="538.0" fill="#dadada"/>
<rect x="1138.8500000000001" y="147.0" width="1.2" height="538.0" fill="#dadada"/>
<rect x="1201.0500000000002" y="147.0" width="1.2" height="538.0" fill="#dadada"/>
<rect x="1263.2500000000002" y="147.0" width="1.2" height="538.0" fill="#dadada"/>
<rect x="1325.45" y="147.0" width="1.2" height="538.0" fill="#dadada"/>
<rect x="19.2" y="162.75" width="1260.8" height="1.2" fill="#dadada"/>
<rect x="0" y="162.75" width="19.2" height="1.2" fill="#3a3a3a"/>
<text x="9.0" y="159.275" font-size="10.5" font-weight="bold" fill="#f4f4f4" text-anchor="middle" textLength="5.6" lengthAdjust="spacingAndGlyphs" stroke="#f4f4f4" stroke-width="0.3">1</text>
<rect x="19.2" y="178.08" width="1260.8" height="1.2" fill="#dadada"/>
<rect x="0" y="178.08" width="19.2" height="1.2" fill="#3a3a3a"/>
<text x="9.0" y="175.11499999999998" font-size="10.5" font-weight="bold" fill="#f4f4f4" text-anchor="middle" textLength="5.6" lengthAdjust="spacingAndGlyphs" stroke="#f4f4f4" stroke-width="0.3">2</text>
<rect x="19.2" y="193.41" width="1260.8" height="1.2" fill="#dadada"/>
<rect x="0" y="193.41" width="19.2" height="1.2" fill="#3a3a3a"/>
<text x="9.0" y="190.445" font-size="10.5" font-weight="bold" fill="#f4f4f4" text-anchor="middle" textLength="5.6" lengthAdjust="spacingAndGlyphs" stroke="#f4f4f4" stroke-width="0.3">3</text>
<rect x="19.2" y="208.74" width="1260.8" height="1.2" fill="#dadada"/>
<rect x="0" y="208.74" width="19.2" height="1.2" fill="#3a3a3a"/>
<text x="9.0" y="205.775" font-size="10.5" font-weight="bold" fill="#f4f4f4" text-anchor="middle" textLength="5.6" lengthAdjust="spacingAndGlyphs" stroke="#f4f4f4" stroke-width="0.3">4</text>
<rect x="19.2" y="224.07" width="1260.8" height="1.2" fill="#dadada"/>
<rect x="0" y="224.07" width="19.2" height="1.2" fill="#3a3a3a"/>
<text x="9.0" y="221.105" font-size="10.5" font-weight="bold" fill="#f4f4f4" text-anchor="middle" textLength="5.6" lengthAdjust="spacingAndGlyphs" stroke="#f4f4f4" stroke-width="0.3">5</text>
<rect x="19.2" y="239.4" width="1260.8" height="1.2" fill="#dadada"/>
<rect x="0" y="239.4" width="19.2" height="1.2" fill="#3a3a3a"/>
<text x="9.0" y="236.43499999999997" font-size="10.5" font-weight="bold" fill="#f4f4f4" text-anchor="middle" textLength="5.6" lengthAdjust="spacingAndGlyphs" stroke="#f4f4f4" stroke-width="0.3">6</text>
<rect x="19.2" y="254.73" width="1260.8" height="1.2" fill="#dadada"/>
<rect x="0" y="254.73" width="19.2" height="1.2" fill="#3a3a3a"/>
<text x="9.0" y="251.765" font-size="10.5" font-weight="bold" fill="#f4f4f4" text-anchor="middle" textLength="5.6" lengthAdjust="spacingAndGlyphs" stroke="#f4f4f4" stroke-width="0.3">7</text>
<rect x="19.2" y="270.05999999999995" width="1260.8" height="1.2" fill="#dadada"/>
<rect x="0" y="270.05999999999995" width="19.2" height="1.2" fill="#3a3a3a"/>
<text x="9.0" y="267.095" font-size="10.5" font-weight="bold" fill="#f4f4f4" text-anchor="middle" textLength="5.6" lengthAdjust="spacingAndGlyphs" stroke="#f4f4f4" stroke-width="0.3">8</text>
<rect x="19.2" y="285.39" width="1260.8" height="1.2" fill="#dadada"/>
<rect x="0" y="285.39" width="19.2" height="1.2" fill="#3a3a3a"/>
<text x="9.0" y="282.425" font-size="10.5" font-weight="bold" fill="#f4f4f4" text-anchor="middle" textLength="5.6" lengthAdjust="spacingAndGlyphs" stroke="#f4f4f4" stroke-width="0.3">9</text>
<rect x="19.2" y="300.71999999999997" width="1260.8" height="1.2" fill="#dadada"/>
<rect x="0" y="300.71999999999997" width="19.2" height="1.2" fill="#3a3a3a"/>
<text x="9.0" y="297.755" font-size="10.5" font-weight="bold" fill="#f4f4f4" text-anchor="middle" textLength="11.6" lengthAdjust="spacingAndGlyphs" stroke="#f4f4f4" stroke-width="0.3">10</text>
<rect x="19.2" y="316.04999999999995" width="1260.8" height="1.2" fill="#dadada"/>
<rect x="0" y="316.04999999999995" width="19.2" height="1.2" fill="#3a3a3a"/>
<text x="9.0" y="313.08500000000004" font-size="10.5" font-weight="bold" fill="#f4f4f4" text-anchor="middle" textLength="11.6" lengthAdjust="spacingAndGlyphs" stroke="#f4f4f4" stroke-width="0.3">11</text>
<rect x="19.2" y="331.38" width="1260.8" height="1.2" fill="#dadada"/>
<rect x="0" y="331.38" width="19.2" height="1.2" fill="#3a3a3a"/>
<text x="9.0" y="328.415" font-size="10.5" font-weight="bold" fill="#f4f4f4" text-anchor="middle" textLength="11.6" lengthAdjust="spacingAndGlyphs" stroke="#f4f4f4" stroke-width="0.3">12</text>
<rect x="19.2" y="346.71" width="1260.8" height="1.2" fill="#dadada"/>
<rect x="0" y="346.71" width="19.2" height="1.2" fill="#3a3a3a"/>
<text x="9.0" y="343.745" font-size="10.5" font-weight="bold" fill="#f4f4f4" text-anchor="middle" textLength="11.6" lengthAdjust="spacingAndGlyphs" stroke="#f4f4f4" stroke-width="0.3">13</text>
<rect x="19.2" y="362.03999999999996" width="1260.8" height="1.2" fill="#dadada"/>
<rect x="0" y="362.03999999999996" width="19.2" height="1.2" fill="#3a3a3a"/>
<text x="9.0" y="359.07500000000005" font-size="10.5" font-weight="bold" fill="#f4f4f4" text-anchor="middle" textLength="11.6" lengthAdjust="spacingAndGlyphs" stroke="#f4f4f4" stroke-width="0.3">14</text>
<rect x="19.2" y="377.37" width="1260.8" height="1.2" fill="#dadada"/>
<rect x="0" y="377.37" width="19.2" height="1.2" fill="#3a3a3a"/>
<text x="9.0" y="374.40500000000003" font-size="10.5" font-weight="bold" fill="#f4f4f4" text-anchor="middle" textLength="11.6" lengthAdjust="spacingAndGlyphs" stroke="#f4f4f4" stroke-width="0.3">15</text>
<rect x="19.2" y="392.69999999999993" width="1260.8" height="1.2" fill="#dadada"/>
<rect x="0" y="392.69999999999993" width="19.2" height="1.2" fill="#3a3a3a"/>
<text x="9.0" y="389.735" font-size="10.5" font-weight="bold" fill="#f4f4f4" text-anchor="middle" textLength="11.6" lengthAdjust="spacingAndGlyphs" stroke="#f4f4f4" stroke-width="0.3">16</text>
<rect x="19.2" y="408.03" width="1260.8" height="1.2" fill="#dadada"/>
<rect x="0" y="408.03" width="19.2" height="1.2" fill="#3a3a3a"/>
<text x="9.0" y="405.065" font-size="10.5" font-weight="bold" fill="#f4f4f4" text-anchor="middle" textLength="11.6" lengthAdjust="spacingAndGlyphs" stroke="#f4f4f4" stroke-width="0.3">17</text>
<rect x="19.2" y="423.36" width="1260.8" height="1.2" fill="#dadada"/>
<rect x="0" y="423.36" width="19.2" height="1.2" fill="#3a3a3a"/>
<text x="9.0" y="420.39500000000004" font-size="10.5" font-weight="bold" fill="#f4f4f4" text-anchor="middle" textLength="11.6" lengthAdjust="spacingAndGlyphs" stroke="#f4f4f4" stroke-width="0.3">18</text>
<rect x="19.2" y="438.68999999999994" width="1260.8" height="1.2" fill="#dadada"/>
<rect x="0" y="438.68999999999994" width="19.2" height="1.2" fill="#3a3a3a"/>
<text x="9.0" y="435.725" font-size="10.5" font-weight="bold" fill="#f4f4f4" text-anchor="middle" textLength="11.6" lengthAdjust="spacingAndGlyphs" stroke="#f4f4f4" stroke-width="0.3">19</text>
<rect x="19.2" y="454.02" width="1260.8" height="1.2" fill="#dadada"/>
<rect x="0" y="454.02" width="19.2" height="1.2" fill="#3a3a3a"/>
<text x="9.0" y="451.055" font-size="10.5" font-weight="bold" fill="#f4f4f4" text-anchor="middle" textLength="11.6" lengthAdjust="spacingAndGlyphs" stroke="#f4f4f4" stroke-width="0.3">20</text>
<rect x="19.2" y="469.35" width="1260.8" height="1.2" fill="#dadada"/>
<rect x="0" y="469.35" width="19.2" height="1.2" fill="#3a3a3a"/>
<text x="9.0" y="466.38500000000005" font-size="10.5" font-weight="bold" fill="#f4f4f4" text-anchor="middle" textLength="11.6" lengthAdjust="spacingAndGlyphs" stroke="#f4f4f4" stroke-width="0.3">21</text>
<rect x="19.2" y="484.67999999999995" width="1260.8" height="1.2" fill="#dadada"/>
<rect x="0" y="484.67999999999995" width="19.2" height="1.2" fill="#3a3a3a"/>
<text x="9.0" y="481.71500000000003" font-size="10.5" font-weight="bold" fill="#f4f4f4" text-anchor="middle" textLength="11.6" lengthAdjust="spacingAndGlyphs" stroke="#f4f4f4" stroke-width="0.3">22</text>
<rect x="19.2" y="500.01" width="1260.8" height="1.2" fill="#dadada"/>
<rect x="0" y="500.01" width="19.2" height="1.2" fill="#3a3a3a"/>
<text x="9.0" y="497.045" font-size="10.5" font-weight="bold" fill="#f4f4f4" text-anchor="middle" textLength="11.6" lengthAdjust="spacingAndGlyphs" stroke="#f4f4f4" stroke-width="0.3">23</text>
<rect x="19.2" y="515.3399999999999" width="1260.8" height="1.2" fill="#dadada"/>
<rect x="0" y="515.3399999999999" width="19.2" height="1.2" fill="#3a3a3a"/>
<text x="9.0" y="512.375" font-size="10.5" font-weight="bold" fill="#f4f4f4" text-anchor="middle" textLength="11.6" lengthAdjust="spacingAndGlyphs" stroke="#f4f4f4" stroke-width="0.3">24</text>
<rect x="19.2" y="530.67" width="1260.8" height="1.2" fill="#dadada"/>
<rect x="0" y="530.67" width="19.2" height="1.2" fill="#3a3a3a"/>
<text x="9.0" y="527.705" font-size="10.5" font-weight="bold" fill="#f4f4f4" text-anchor="middle" textLength="11.6" lengthAdjust="spacingAndGlyphs" stroke="#f4f4f4" stroke-width="0.3">25</text>
<rect x="19.2" y="546.0" width="1260.8" height="1.2" fill="#dadada"/>
<rect x="0" y="546.0" width="19.2" height="1.2" fill="#3a3a3a"/>
<text x="9.0" y="543.035" font-size="10.5" font-weight="bold" fill="#f4f4f4" text-anchor="middle" textLength="11.6" lengthAdjust="spacingAndGlyphs" stroke="#f4f4f4" stroke-width="0.3">26</text>
<rect x="19.2" y="561.3299999999999" width="1260.8" height="1.2" fill="#dadada"/>
<rect x="0" y="561.3299999999999" width="19.2" height="1.2" fill="#3a3a3a"/>
<text x="9.0" y="558.365" font-size="10.5" font-weight="bold" fill="#f4f4f4" text-anchor="middle" textLength="11.6" lengthAdjust="spacingAndGlyphs" stroke="#f4f4f4" stroke-width="0.3">27</text>
<rect x="19.2" y="576.66" width="1260.8" height="1.2" fill="#dadada"/>
<rect x="0" y="576.66" width="19.2" height="1.2" fill="#3a3a3a"/>
<text x="9.0" y="573.695" font-size="10.5" font-weight="bold" fill="#f4f4f4" text-anchor="middle" textLength="11.6" lengthAdjust="spacingAndGlyphs" stroke="#f4f4f4" stroke-width="0.3">28</text>
<rect x="19.2" y="591.99" width="1260.8" height="1.2" fill="#dadada"/>
<rect x="0" y="591.99" width="19.2" height="1.2" fill="#3a3a3a"/>
<text x="9.0" y="589.025" font-size="10.5" font-weight="bold" fill="#f4f4f4" text-anchor="middle" textLength="11.6" lengthAdjust="spacingAndGlyphs" stroke="#f4f4f4" stroke-width="0.3">29</text>
<rect x="19.2" y="607.3199999999999" width="1260.8" height="1.2" fill="#dadada"/>
<rect x="0" y="607.3199999999999" width="19.2" height="1.2" fill="#3a3a3a"/>
<text x="9.0" y="604.355" font-size="10.5" font-weight="bold" fill="#f4f4f4" text-anchor="middle" textLength="11.6" lengthAdjust="spacingAndGlyphs" stroke="#f4f4f4" stroke-width="0.3">30</text>
<rect x="19.2" y="622.65" width="1260.8" height="1.2" fill="#dadada"/>
<rect x="0" y="622.65" width="19.2" height="1.2" fill="#3a3a3a"/>
<text x="9.0" y="619.6850000000001" font-size="10.5" font-weight="bold" fill="#f4f4f4" text-anchor="middle" textLength="11.6" lengthAdjust="spacingAndGlyphs" stroke="#f4f4f4" stroke-width="0.3">31</text>
<rect x="19.2" y="637.98" width="1260.8" height="1.2" fill="#dadada"/>
<rect x="0" y="637.98" width="19.2" height="1.2" fill="#3a3a3a"/>
<text x="9.0" y="635.015" font-size="10.5" font-weight="bold" fill="#f4f4f4" text-anchor="middle" textLength="11.6" lengthAdjust="spacingAndGlyphs" stroke="#f4f4f4" stroke-width="0.3">32</text>
<rect x="19.2" y="653.31" width="1260.8" height="1.2" fill="#dadada"/>
<rect x="0" y="653.31" width="19.2" height="1.2" fill="#3a3a3a"/>
<text x="9.0" y="650.345" font-size="10.5" font-weight="bold" fill="#f4f4f4" text-anchor="middle" textLength="11.6" lengthAdjust="spacingAndGlyphs" stroke="#f4f4f4" stroke-width="0.3">33</text>
<rect x="19.2" y="668.64" width="1260.8" height="1.2" fill="#dadada"/>
<rect x="0" y="668.64" width="19.2" height="1.2" fill="#3a3a3a"/>
<text x="9.0" y="665.6750000000001" font-size="10.5" font-weight="bold" fill="#f4f4f4" text-anchor="middle" textLength="11.6" lengthAdjust="spacingAndGlyphs" stroke="#f4f4f4" stroke-width="0.3">34</text>
<rect x="19.2" y="683.97" width="1260.8" height="1.2" fill="#dadada"/>
<rect x="0" y="683.97" width="19.2" height="1.2" fill="#3a3a3a"/>
<text x="9.0" y="681.005" font-size="10.5" font-weight="bold" fill="#f4f4f4" text-anchor="middle" textLength="11.6" lengthAdjust="spacingAndGlyphs" stroke="#f4f4f4" stroke-width="0.3">35</text>
<text x="21.5" y="159.95" font-size="10.6" font-weight="normal" fill="#1e1e1e" text-anchor="start" textLength="11" lengthAdjust="spacingAndGlyphs" stroke="#1e1e1e" stroke-width="0.1">ID</text>
<text x="206.6" y="159.95" font-size="10.6" font-weight="normal" fill="#1e1e1e" text-anchor="start" textLength="52.8" lengthAdjust="spacingAndGlyphs" stroke="#1e1e1e" stroke-width="0.1">Timestamp</text>
<text x="309.4" y="159.95" font-size="10.6" font-weight="normal" fill="#1e1e1e" text-anchor="start" textLength="33.6" lengthAdjust="spacingAndGlyphs" stroke="#1e1e1e" stroke-width="0.1">battery</text>
<text x="22.5" y="175.28" font-size="10.6" font-weight="normal" fill="#1e1e1e" text-anchor="start" textLength="132.5" lengthAdjust="spacingAndGlyphs" stroke="#1e1e1e" stroke-width="0.1">60e44605be3fc900069dcdc6</text>
<text x="303.9" y="175.28" font-size="10.6" font-weight="normal" fill="#1e1e1e" text-anchor="end" textLength="73.4" lengthAdjust="spacingAndGlyphs" stroke="#1e1e1e" stroke-width="0.1">1625573156000</text>
<text x="390.3" y="175.28" font-size="10.6" font-weight="normal" fill="#1e1e1e" text-anchor="end" textLength="17.2" lengthAdjust="spacingAndGlyphs" stroke="#1e1e1e" stroke-width="0.1">100</text>
<text x="22.5" y="190.60999999999999" font-size="10.6" font-weight="normal" fill="#1e1e1e" text-anchor="start" textLength="132.5" lengthAdjust="spacingAndGlyphs" stroke="#1e1e1e" stroke-width="0.1">60e44605be3fc900069dcdc7</text>
<text x="303.9" y="190.60999999999999" font-size="10.6" font-weight="normal" fill="#1e1e1e" text-anchor="end" textLength="73.4" lengthAdjust="spacingAndGlyphs" stroke="#1e1e1e" stroke-width="0.1">1625573156000</text>
<text x="390.3" y="190.60999999999999" font-size="10.6" font-weight="normal" fill="#1e1e1e" text-anchor="end" textLength="17.2" lengthAdjust="spacingAndGlyphs" stroke="#1e1e1e" stroke-width="0.1">100</text>
<text x="22.5" y="205.94" font-size="10.6" font-weight="normal" fill="#1e1e1e" text-anchor="start" textLength="132.5" lengthAdjust="spacingAndGlyphs" stroke="#1e1e1e" stroke-width="0.1">60e44605be3fc900069dcdc8</text>
<text x="303.9" y="205.94" font-size="10.6" font-weight="normal" fill="#1e1e1e" text-anchor="end" textLength="73.4" lengthAdjust="spacingAndGlyphs" stroke="#1e1e1e" stroke-width="0.1">1625573156000</text>
<text x="390.3" y="205.94" font-size="10.6" font-weight="normal" fill="#1e1e1e" text-anchor="end" textLength="17.2" lengthAdjust="spacingAndGlyphs" stroke="#1e1e1e" stroke-width="0.1">100</text>
<text x="22.5" y="221.26999999999998" font-size="10.6" font-weight="normal" fill="#1e1e1e" text-anchor="start" textLength="132.5" lengthAdjust="spacingAndGlyphs" stroke="#1e1e1e" stroke-width="0.1">60e44605be3fc900069dcdc9</text>
<text x="303.9" y="221.26999999999998" font-size="10.6" font-weight="normal" fill="#1e1e1e" text-anchor="end" textLength="73.4" lengthAdjust="spacingAndGlyphs" stroke="#1e1e1e" stroke-width="0.1">1625573156000</text>
<text x="390.3" y="221.26999999999998" font-size="10.6" font-weight="normal" fill="#1e1e1e" text-anchor="end" textLength="17.2" lengthAdjust="spacingAndGlyphs" stroke="#1e1e1e" stroke-width="0.1">100</text>
<text x="22.5" y="236.6" font-size="10.6" font-weight="normal" fill="#1e1e1e" text-anchor="start" textLength="132.5" lengthAdjust="spacingAndGlyphs" stroke="#1e1e1e" stroke-width="0.1">60e44605be3fc900069dcdc6</text>
<text x="303.9" y="236.6" font-size="10.6" font-weight="normal" fill="#1e1e1e" text-anchor="end" textLength="73.4" lengthAdjust="spacingAndGlyphs" stroke="#1e1e1e" stroke-width="0.1">1625573276000</text>
<text x="390.3" y="236.6" font-size="10.6" font-weight="normal" fill="#1e1e1e" text-anchor="end" textLength="17.2" lengthAdjust="spacingAndGlyphs" stroke="#1e1e1e" stroke-width="0.1">100</text>
<text x="22.5" y="251.92999999999998" font-size="10.6" font-weight="normal" fill="#1e1e1e" text-anchor="start" textLength="132.5" lengthAdjust="spacingAndGlyphs" stroke="#1e1e1e" stroke-width="0.1">60e44605be3fc900069dcdc7</text>
<text x="303.9" y="251.92999999999998" font-size="10.6" font-weight="normal" fill="#1e1e1e" text-anchor="end" textLength="73.4" lengthAdjust="spacingAndGlyphs" stroke="#1e1e1e" stroke-width="0.1">1625573276000</text>
<text x="390.3" y="251.92999999999998" font-size="10.6" font-weight="normal" fill="#1e1e1e" text-anchor="end" textLength="11.4" lengthAdjust="spacingAndGlyphs" stroke="#1e1e1e" stroke-width="0.1">99</text>
<text x="22.5" y="267.26" font-size="10.6" font-weight="normal" fill="#1e1e1e" text-anchor="start" textLength="132.5" lengthAdjust="spacingAndGlyphs" stroke="#1e1e1e" stroke-width="0.1">60e44605be3fc900069dcdc8</text>
<text x="303.9" y="267.26" font-size="10.6" font-weight="normal" fill="#1e1e1e" text-anchor="end" textLength="73.4" lengthAdjust="spacingAndGlyphs" stroke="#1e1e1e" stroke-width="0.1">1625573276000</text>
<text x="390.3" y="267.26" font-size="10.6" font-weight="normal" fill="#1e1e1e" text-anchor="end" textLength="17.2" lengthAdjust="spacingAndGlyphs" stroke="#1e1e1e" stroke-width="0.1">100</text>
<text x="22.5" y="282.59000000000003" font-size="10.6" font-weight="normal" fill="#1e1e1e" text-anchor="start" textLength="132.5" lengthAdjust="spacingAndGlyphs" stroke="#1e1e1e" stroke-width="0.1">60e44605be3fc900069dcdc9</text>
<text x="303.9" y="282.59000000000003" font-size="10.6" font-weight="normal" fill="#1e1e1e" text-anchor="end" textLength="73.4" lengthAdjust="spacingAndGlyphs" stroke="#1e1e1e" stroke-width="0.1">1625573276000</text>
<text x="390.3" y="282.59000000000003" font-size="10.6" font-weight="normal" fill="#1e1e1e" text-anchor="end" textLength="17.2" lengthAdjust="spacingAndGlyphs" stroke="#1e1e1e" stroke-width="0.1">100</text>
<text x="22.5" y="297.92" font-size="10.6" font-weight="normal" fill="#1e1e1e" text-anchor="start" textLength="132.5" lengthAdjust="spacingAndGlyphs" stroke="#1e1e1e" stroke-width="0.1">60e44605be3fc900069dcdc6</text>
<text x="303.9" y="297.92" font-size="10.6" font-weight="normal" fill="#1e1e1e" text-anchor="end" textLength="73.4" lengthAdjust="spacingAndGlyphs" stroke="#1e1e1e" stroke-width="0.1">1625573396000</text>
<text x="390.3" y="297.92" font-size="10.6" font-weight="normal" fill="#1e1e1e" text-anchor="end" textLength="11.4" lengthAdjust="spacingAndGlyphs" stroke="#1e1e1e" stroke-width="0.1">99</text>
<text x="22.5" y="313.25" font-size="10.6" font-weight="normal" fill="#1e1e1e" text-anchor="start" textLength="132.5" lengthAdjust="spacingAndGlyphs" stroke="#1e1e1e" stroke-width="0.1">60e44605be3fc900069dcdc7</text>
<text x="303.9" y="313.25" font-size="10.6" font-weight="normal" fill="#1e1e1e" text-anchor="end" textLength="73.4" lengthAdjust="spacingAndGlyphs" stroke="#1e1e1e" stroke-width="0.1">1625573396000</text>
<text x="390.3" y="313.25" font-size="10.6" font-weight="normal" fill="#1e1e1e" text-anchor="end" textLength="11.4" lengthAdjust="spacingAndGlyphs" stroke="#1e1e1e" stroke-width="0.1">98</text>
<text x="22.5" y="328.58000000000004" font-size="10.6" font-weight="normal" fill="#1e1e1e" text-anchor="start" textLength="132.5" lengthAdjust="spacingAndGlyphs" stroke="#1e1e1e" stroke-width="0.1">60e44605be3fc900069dcdc8</text>
<text x="303.9" y="328.58000000000004" font-size="10.6" font-weight="normal" fill="#1e1e1e" text-anchor="end" textLength="73.4" lengthAdjust="spacingAndGlyphs" stroke="#1e1e1e" stroke-width="0.1">1625573396000</text>
<text x="390.3" y="328.58000000000004" font-size="10.6" font-weight="normal" fill="#1e1e1e" text-anchor="end" textLength="17.2" lengthAdjust="spacingAndGlyphs" stroke="#1e1e1e" stroke-width="0.1">100</text>
<text x="22.5" y="343.91" font-size="10.6" font-weight="normal" fill="#1e1e1e" text-anchor="start" textLength="132.5" lengthAdjust="spacingAndGlyphs" stroke="#1e1e1e" stroke-width="0.1">60e44605be3fc900069dcdc9</text>
<text x="303.9" y="343.91" font-size="10.6" font-weight="normal" fill="#1e1e1e" text-anchor="end" textLength="73.4" lengthAdjust="spacingAndGlyphs" stroke="#1e1e1e" stroke-width="0.1">1625573396000</text>
<text x="390.3" y="343.91" font-size="10.6" font-weight="normal" fill="#1e1e1e" text-anchor="end" textLength="17.2" lengthAdjust="spacingAndGlyphs" stroke="#1e1e1e" stroke-width="0.1">100</text>
<text x="22.5" y="359.24" font-size="10.6" font-weight="normal" fill="#1e1e1e" text-anchor="start" textLength="132.5" lengthAdjust="spacingAndGlyphs" stroke="#1e1e1e" stroke-width="0.1">60e44605be3fc900069dcdc6</text>
<text x="303.9" y="359.24" font-size="10.6" font-weight="normal" fill="#1e1e1e" text-anchor="end" textLength="73.4" lengthAdjust="spacingAndGlyphs" stroke="#1e1e1e" stroke-width="0.1">1625573516000</text>
<text x="390.3" y="359.24" font-size="10.6" font-weight="normal" fill="#1e1e1e" text-anchor="end" textLength="11.4" lengthAdjust="spacingAndGlyphs" stroke="#1e1e1e" stroke-width="0.1">99</text>
<text x="22.5" y="374.57000000000005" font-size="10.6" font-weight="normal" fill="#1e1e1e" text-anchor="start" textLength="132.5" lengthAdjust="spacingAndGlyphs" stroke="#1e1e1e" stroke-width="0.1">60e44605be3fc900069dcdc7</text>
<text x="303.9" y="374.57000000000005" font-size="10.6" font-weight="normal" fill="#1e1e1e" text-anchor="end" textLength="73.4" lengthAdjust="spacingAndGlyphs" stroke="#1e1e1e" stroke-width="0.1">1625573516000</text>
<text x="390.3" y="374.57000000000005" font-size="10.6" font-weight="normal" fill="#1e1e1e" text-anchor="end" textLength="11.4" lengthAdjust="spacingAndGlyphs" stroke="#1e1e1e" stroke-width="0.1">98</text>
<text x="22.5" y="389.9" font-size="10.6" font-weight="normal" fill="#1e1e1e" text-anchor="start" textLength="132.5" lengthAdjust="spacingAndGlyphs" stroke="#1e1e1e" stroke-width="0.1">60e44605be3fc900069dcdc8</text>
<text x="303.9" y="389.9" font-size="10.6" font-weight="normal" fill="#1e1e1e" text-anchor="end" textLength="73.4" lengthAdjust="spacingAndGlyphs" stroke="#1e1e1e" stroke-width="0.1">1625573516000</text>
<text x="390.3" y="389.9" font-size="10.6" font-weight="normal" fill="#1e1e1e" text-anchor="end" textLength="17.2" lengthAdjust="spacingAndGlyphs" stroke="#1e1e1e" stroke-width="0.1">100</text>
<text x="22.5" y="405.23" font-size="10.6" font-weight="normal" fill="#1e1e1e" text-anchor="start" textLength="132.5" lengthAdjust="spacingAndGlyphs" stroke="#1e1e1e" stroke-width="0.1">60e44605be3fc900069dcdc9</text>
<text x="303.9" y="405.23" font-size="10.6" font-weight="normal" fill="#1e1e1e" text-anchor="end" textLength="73.4" lengthAdjust="spacingAndGlyphs" stroke="#1e1e1e" stroke-width="0.1">1625573516000</text>
<text x="390.3" y="405.23" font-size="10.6" font-weight="normal" fill="#1e1e1e" text-anchor="end" textLength="17.2" lengthAdjust="spacingAndGlyphs" stroke="#1e1e1e" stroke-width="0.1">100</text>
<text x="22.5" y="420.56000000000006" font-size="10.6" font-weight="normal" fill="#1e1e1e" text-anchor="start" textLength="132.5" lengthAdjust="spacingAndGlyphs" stroke="#1e1e1e" stroke-width="0.1">60e44605be3fc900069dcdc6</text>
<text x="303.9" y="420.56000000000006" font-size="10.6" font-weight="normal" fill="#1e1e1e" text-anchor="end" textLength="73.4" lengthAdjust="spacingAndGlyphs" stroke="#1e1e1e" stroke-width="0.1">1625573636000</text>
<text x="390.3" y="420.56000000000006" font-size="10.6" font-weight="normal" fill="#1e1e1e" text-anchor="end" textLength="11.4" lengthAdjust="spacingAndGlyphs" stroke="#1e1e1e" stroke-width="0.1">99</text>
<text x="22.5" y="435.89" font-size="10.6" font-weight="normal" fill="#1e1e1e" text-anchor="start" textLength="132.5" lengthAdjust="spacingAndGlyphs" stroke="#1e1e1e" stroke-width="0.1">60e44605be3fc900069dcdc7</text>
<text x="303.9" y="435.89" font-size="10.6" font-weight="normal" fill="#1e1e1e" text-anchor="end" textLength="73.4" lengthAdjust="spacingAndGlyphs" stroke="#1e1e1e" stroke-width="0.1">1625573636000</text>
<text x="390.3" y="435.89" font-size="10.6" font-weight="normal" fill="#1e1e1e" text-anchor="end" textLength="11.4" lengthAdjust="spacingAndGlyphs" stroke="#1e1e1e" stroke-width="0.1">96</text>
<text x="22.5" y="451.22" font-size="10.6" font-weight="normal" fill="#1e1e1e" text-anchor="start" textLength="132.5" lengthAdjust="spacingAndGlyphs" stroke="#1e1e1e" stroke-width="0.1">60e44605be3fc900069dcdc8</text>
<text x="303.9" y="451.22" font-size="10.6" font-weight="normal" fill="#1e1e1e" text-anchor="end" textLength="73.4" lengthAdjust="spacingAndGlyphs" stroke="#1e1e1e" stroke-width="0.1">1625573636000</text>
<text x="390.3" y="451.22" font-size="10.6" font-weight="normal" fill="#1e1e1e" text-anchor="end" textLength="17.2" lengthAdjust="spacingAndGlyphs" stroke="#1e1e1e" stroke-width="0.1">100</text>
<text x="22.5" y="466.55000000000007" font-size="10.6" font-weight="normal" fill="#1e1e1e" text-anchor="start" textLength="132.5" lengthAdjust="spacingAndGlyphs" stroke="#1e1e1e" stroke-width="0.1">60e44605be3fc900069dcdc9</text>
<text x="303.9" y="466.55000000000007" font-size="10.6" font-weight="normal" fill="#1e1e1e" text-anchor="end" textLength="73.4" lengthAdjust="spacingAndGlyphs" stroke="#1e1e1e" stroke-width="0.1">1625573636000</text>
<text x="390.3" y="466.55000000000007" font-size="10.6" font-weight="normal" fill="#1e1e1e" text-anchor="end" textLength="17.2" lengthAdjust="spacingAndGlyphs" stroke="#1e1e1e" stroke-width="0.1">100</text>
<text x="22.5" y="481.88" font-size="10.6" font-weight="normal" fill="#1e1e1e" text-anchor="start" textLength="132.5" lengthAdjust="spacingAndGlyphs" stroke="#1e1e1e" stroke-width="0.1">60e44605be3fc900069dcdc6</text>
<text x="303.9" y="481.88" font-size="10.6" font-weight="normal" fill="#1e1e1e" text-anchor="end" textLength="73.4" lengthAdjust="spacingAndGlyphs" stroke="#1e1e1e" stroke-width="0.1">1625573756000</text>
<text x="390.3" y="481.88" font-size="10.6" font-weight="normal" fill="#1e1e1e" text-anchor="end" textLength="11.4" lengthAdjust="spacingAndGlyphs" stroke="#1e1e1e" stroke-width="0.1">99</text>
<text x="22.5" y="497.21000000000004" font-size="10.6" font-weight="normal" fill="#1e1e1e" text-anchor="start" textLength="132.5" lengthAdjust="spacingAndGlyphs" stroke="#1e1e1e" stroke-width="0.1">60e44605be3fc900069dcdc7</text>
<text x="303.9" y="497.21000000000004" font-size="10.6" font-weight="normal" fill="#1e1e1e" text-anchor="end" textLength="73.4" lengthAdjust="spacingAndGlyphs" stroke="#1e1e1e" stroke-width="0.1">1625573756000</text>
<text x="390.3" y="497.21000000000004" font-size="10.6" font-weight="normal" fill="#1e1e1e" text-anchor="end" textLength="11.4" lengthAdjust="spacingAndGlyphs" stroke="#1e1e1e" stroke-width="0.1">94</text>
<text x="22.5" y="512.54" font-size="10.6" font-weight="normal" fill="#1e1e1e" text-anchor="start" textLength="132.5" lengthAdjust="spacingAndGlyphs" stroke="#1e1e1e" stroke-width="0.1">60e44605be3fc900069dcdc8</text>
<text x="303.9" y="512.54" font-size="10.6" font-weight="normal" fill="#1e1e1e" text-anchor="end" textLength="73.4" lengthAdjust="spacingAndGlyphs" stroke="#1e1e1e" stroke-width="0.1">1625573756000</text>
<text x="390.3" y="512.54" font-size="10.6" font-weight="normal" fill="#1e1e1e" text-anchor="end" textLength="17.2" lengthAdjust="spacingAndGlyphs" stroke="#1e1e1e" stroke-width="0.1">100</text>
<text x="22.5" y="527.87" font-size="10.6" font-weight="normal" fill="#1e1e1e" text-anchor="start" textLength="132.5" lengthAdjust="spacingAndGlyphs" stroke="#1e1e1e" stroke-width="0.1">60e44605be3fc900069dcdc9</text>
<text x="303.9" y="527.87" font-size="10.6" font-weight="normal" fill="#1e1e1e" text-anchor="end" textLength="73.4" lengthAdjust="spacingAndGlyphs" stroke="#1e1e1e" stroke-width="0.1">1625573756000</text>
<text x="390.3" y="527.87" font-size="10.6" font-weight="normal" fill="#1e1e1e" text-anchor="end" textLength="17.2" lengthAdjust="spacingAndGlyphs" stroke="#1e1e1e" stroke-width="0.1">100</text>
<rect x="19.599999999999998" y="147.4" width="184.4" height="16.349999999999994" fill="none" stroke="#1e6b34" stroke-width="1.9"/>
<rect x="201.39999999999998" y="161.75" width="5" height="5" fill="#1e6b34" stroke="#ffffff" stroke-width="0.8"/>
<rect x="0" y="684.4" width="1280" height="25" fill="#333333"/>
<rect x="0" y="684.4" width="1280" height="2" fill="#262626"/>
<path d="M19.5,694 L12,698.5 L19.5,703 Z" stroke="none" stroke-width="0" fill="#5c5c5c"/>
<path d="M34,694 L41.5,698.5 L34,703 Z" stroke="none" stroke-width="0" fill="#5c5c5c"/>
<path d="M56.3,685.4 H266.3 V702.8 Q266.3,705.8 263.3,705.8 H59.3 Q56.3,705.8 56.3,702.8 Z" fill="#ffffff"/>
<text x="77" y="701.3" font-size="11.4" font-weight="bold" fill="#2b7b3b" text-anchor="start" textLength="168.5" lengthAdjust="spacingAndGlyphs">battery-state-reports-last-30-d</text>
<path d="M285,693.5 V703.5 M280,698.5 H290" stroke="#dcdcdc" stroke-width="1.8" fill="none"/>
<rect x="302.7" y="686" width="1" height="17.5" fill="#4a4a4a"/>
<rect x="0" y="708.8" width="1280" height="2" fill="#2a2a2a"/>
<rect x="0" y="710.5" width="1280" height="17.5" fill="#474747"/>
<text x="21.3" y="725.5" font-size="12" font-weight="normal" fill="#f2f2f2" text-anchor="start" textLength="33.2" lengthAdjust="spacingAndGlyphs" stroke="#f2f2f2" stroke-width="0.3">Ready</text>
<rect x="977.3" y="710.5" width="35.7" height="17.5" fill="#555555"/>
<rect x="989.6" y="714.9" width="11.4" height="11.3" rx="1.5" fill="#161616" stroke="#f2f2f2" stroke-width="1.4"/>
<path d="M993.4,715 V726" stroke="#f2f2f2" stroke-width="1.3" fill="none"/>
<path d="M997.2,715 V726" stroke="#f2f2f2" stroke-width="1.3" fill="none"/>
<path d="M989.8,718.7 H1000.8" stroke="#f2f2f2" stroke-width="1.3" fill="none"/>
<path d="M989.8,722.5 H1000.8" stroke="#f2f2f2" stroke-width="1.3" fill="none"/>
<rect x="1022.9" y="714.8" width="13" height="11.5" rx="1.8" fill="none" stroke="#f2f2f2" stroke-width="1.4"/>
<rect x="1025.6" y="716.6" width="7.6" height="8" fill="#b0b0b0" stroke="#f2f2f2" stroke-width="1"/>
<path d="M1026.8,719.2 H1032 M1026.8,721 H1032 M1026.8,722.8 H1032" stroke="#555" stroke-width="0.7" fill="none"/>
<rect x="1057.5" y="714.8" width="12.6" height="11.5" rx="1.2" fill="none" stroke="#f2f2f2" stroke-width="1.4"/>
<path d="M1060.3,715 V719.3 M1063.3,715 V719.3 M1067.2,715 V723.3 H1058" stroke="#f2f2f2" stroke-width="1.3" fill="none"/>
<rect x="1088" y="720" width="8.4" height="2.2" fill="#f0f0f0"/>
<rect x="1102.7" y="719.6" width="95.3" height="3.6" fill="#6c6c6c" rx="1.8"/>
<circle cx="1150.4" cy="721.2" r="7.4" fill="#9c9c9c"/>
<path d="M1208.8,716.5 V725.5 M1204.3,721 H1213.3" stroke="#f0f0f0" stroke-width="2" fill="none"/>
<text x="1229.6" y="725.5" font-size="12" font-weight="normal" fill="#f2f2f2" text-anchor="start" textLength="29.7" lengthAdjust="spacingAndGlyphs" stroke="#f2f2f2" stroke-width="0.3">100%</text></svg>
</body></html>
